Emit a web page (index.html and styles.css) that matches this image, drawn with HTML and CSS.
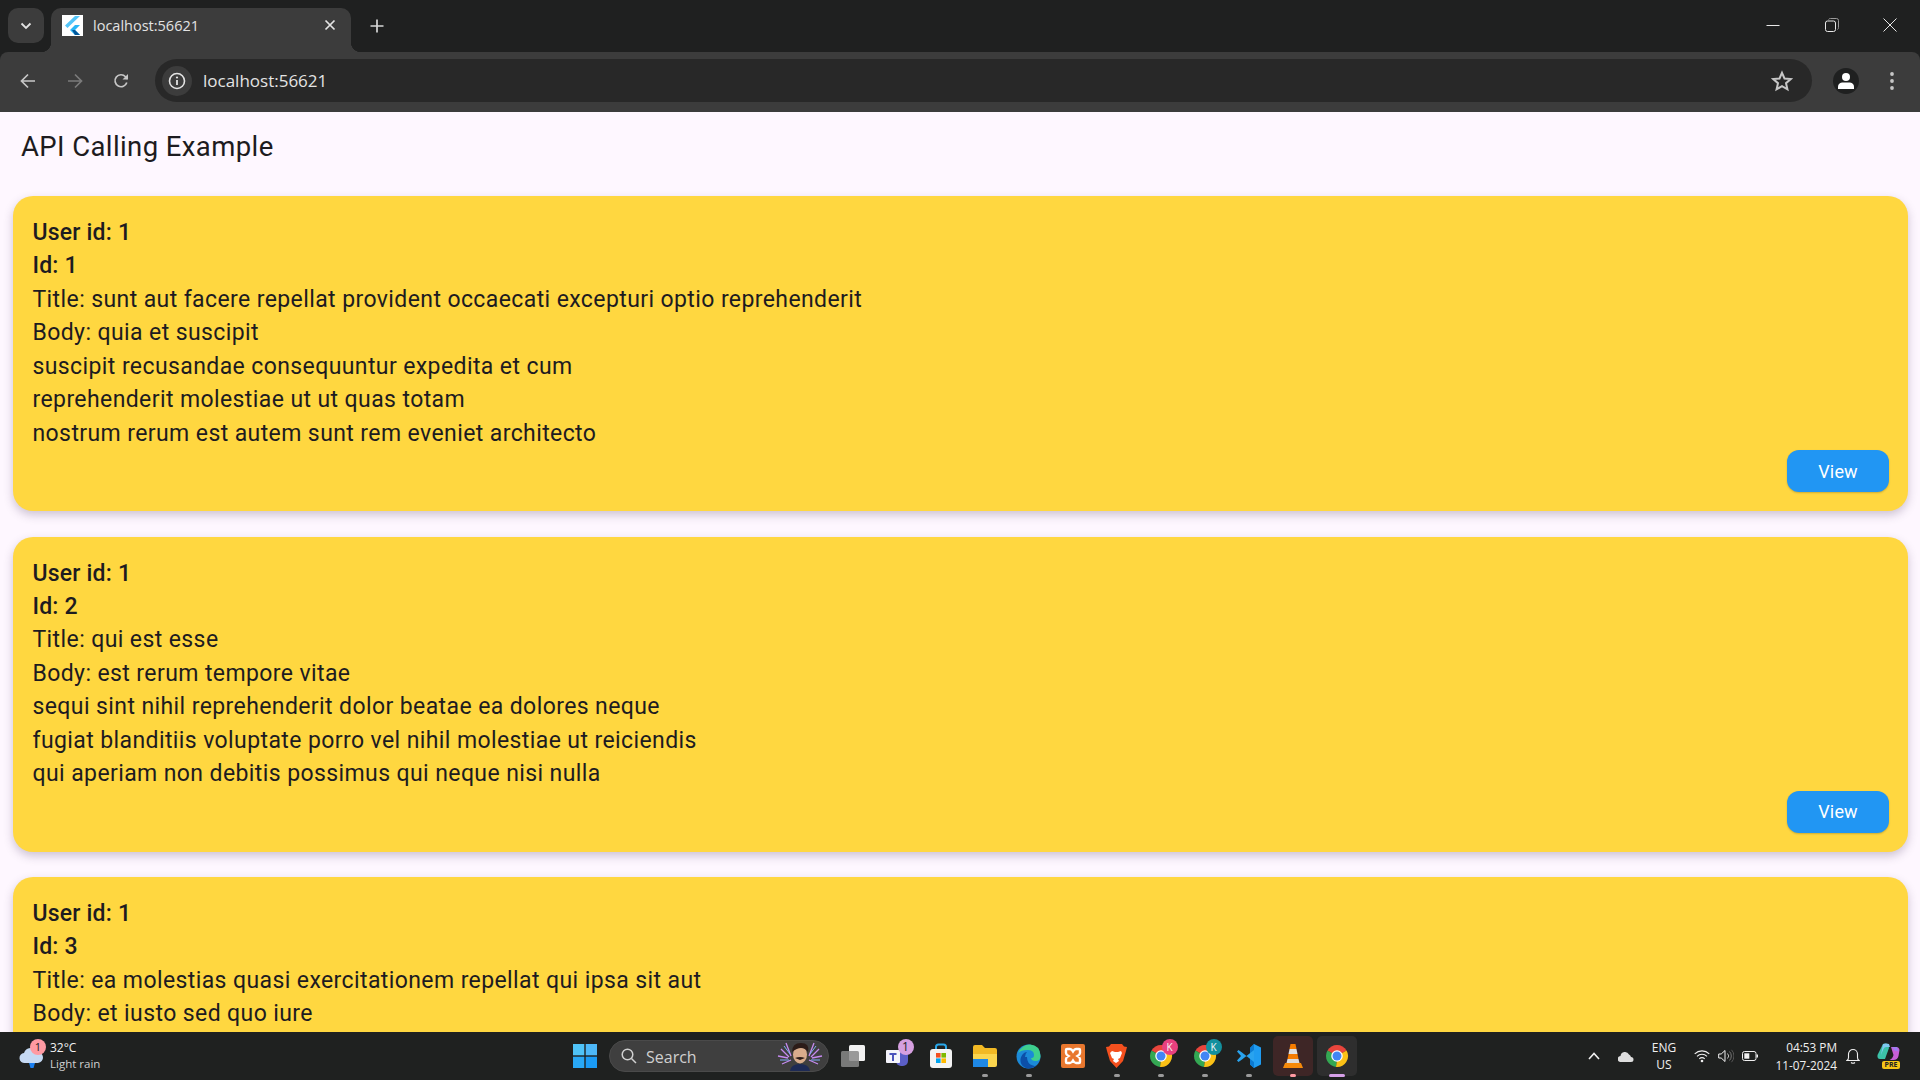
FILE: index.html
```html
<!DOCTYPE html>
<html lang="en">
<head>
<meta charset="utf-8">
<title>localhost:56621</title>
<link rel="stylesheet" href="styles.css">
</head>
<body>
<svg class="defs" width="0" height="0">
  <defs>
    <symbol id="chrome" viewBox="0 0 48 48">
      <path d="M24 24L4.950 13A22 22 0 0 1 43.050 13Z" fill="#e8453c"/>
      <path d="M24 24L43.050 13A22 22 0 0 1 22 45.900Z" fill="#fbc116"/>
      <path d="M24 24L22 45.900A22 22 0 0 1 4.950 13Z" fill="#34a853"/>
      <circle cx="24" cy="24" r="11.500" fill="#fff"/>
      <circle cx="24" cy="24" r="9" fill="#4285f4"/>
    </symbol>
  </defs>
</svg>

<header class="tabstrip">
  <div class="tab-search">
    <svg width="12" height="8" viewBox="0 0 12 8"><path d="M1.500 1.500L6 6l4.500-4.500" fill="none" stroke="#e3e3e3" stroke-width="1.800"/></svg>
  </div>
  <div class="tab">
    <div class="favicon">
      <svg width="21" height="21" viewBox="0 0 21 21"><path d="M13 1h5L8 10.500 5.500 13 3 10.500z" fill="#54c5f8"/><path d="M13 10h5l-5 5 5 5h-5l-5-5z" fill="#29b6f6"/><path d="M10 15l3 5h5l-5-5z" fill="#01579b"/></svg>
    </div>
    <span class="tab-title">localhost:56621</span>
    <svg class="tab-close" width="12" height="12" viewBox="0 0 12 12"><path d="M1.500 1.500l9 9M10.500 1.500l-9 9" stroke="#e3e3e3" stroke-width="1.700"/></svg>
  </div>
  <svg class="new-tab" width="14" height="14" viewBox="0 0 14 14"><path d="M7 0.500v13M0.500 7h13" stroke="#d6d6d6" stroke-width="1.700"/></svg>
  <div class="window-controls">
    <svg width="14" height="14" viewBox="0 0 14 14"><path d="M0.500 7.500h13" stroke="#e8e8e8" stroke-width="1"/></svg>
    <svg width="14" height="14" viewBox="0 0 14 14"><rect x="0.500" y="3" width="10" height="10.500" rx="2" fill="none" stroke="#e8e8e8"/><path d="M3.500 1.500q.5-1 2-1h6q2 0 2 2v7q0 1.500-1 2" fill="none" stroke="#9a9a9a"/></svg>
    <svg width="14" height="14" viewBox="0 0 14 14"><path d="M0.500 0.500l13 13M13.500 0.500l-13 13" stroke="#e8e8e8" stroke-width="1"/></svg>
  </div>
</header>

<nav class="toolbar">
  <svg class="nav-icon" width="16" height="16" viewBox="0 0 16 16"><path d="M15 8H2M8 1.500L1.500 8 8 14.500" fill="none" stroke="#c7c7c7" stroke-width="1.700"/></svg>
  <svg class="nav-icon" width="16" height="16" viewBox="0 0 16 16"><path d="M1 8h13M8 1.500L14.500 8 8 14.500" fill="none" stroke="#7b7b7b" stroke-width="1.700"/></svg>
  <svg class="nav-icon" width="16" height="16" viewBox="0 0 16 16"><path d="M13.800 9.500A6 6 0 1 1 12.500 3.700L14.500 6" fill="none" stroke="#c7c7c7" stroke-width="1.700"/><path d="M15 1v5.500H9.500z" fill="#c7c7c7"/></svg>
  <div class="omnibox">
    <div class="site-info">
      <svg width="18" height="18" viewBox="0 0 18 18"><circle cx="9" cy="9" r="7.500" fill="none" stroke="#e3e3e3" stroke-width="1.600"/><path d="M9 8v5" stroke="#e3e3e3" stroke-width="1.800"/><circle cx="9" cy="5.500" r="1.100" fill="#e3e3e3"/></svg>
    </div>
    <span class="url">localhost:56621</span>
    <svg class="star" width="22" height="22" viewBox="0 0 22 22"><path d="M11 2.800l2.500 5.700 6.200.6-4.700 4.100 1.400 6.100L11 16.100l-5.400 3.200L7 13.200 2.300 9.100l6.200-.6z" fill="none" stroke="#c7c7c7" stroke-width="2"/></svg>
  </div>
  <div class="avatar">
    <svg width="18" height="18" viewBox="0 0 18 18"><circle cx="9" cy="5" r="4" fill="#fff"/><path d="M1 17v-2q0-4 4-4.500h8q4 .5 4 4.500v2z" fill="#fff"/></svg>
  </div>
  <svg class="menu" width="4" height="18" viewBox="0 0 4 18"><circle cx="2" cy="2" r="1.900" fill="#c7c7c7"/><circle cx="2" cy="9" r="1.900" fill="#c7c7c7"/><circle cx="2" cy="16" r="1.900" fill="#c7c7c7"/></svg>
</nav>

<main class="page">
  <h1 class="app-title">API Calling Example</h1>
  <section class="post">
    <p class="strong">User id: 1</p>
    <p class="strong">Id: 1</p>
    <p>Title: sunt aut facere repellat provident occaecati excepturi optio reprehenderit</p>
    <p>Body: quia et suscipit</p>
    <p>suscipit recusandae consequuntur expedita et cum</p>
    <p>reprehenderit molestiae ut ut quas totam</p>
    <p>nostrum rerum est autem sunt rem eveniet architecto</p>
    <div class="post-actions"><button class="view">View</button></div>
  </section>
  <section class="post">
    <p class="strong">User id: 1</p>
    <p class="strong">Id: 2</p>
    <p>Title: qui est esse</p>
    <p>Body: est rerum tempore vitae</p>
    <p>sequi sint nihil reprehenderit dolor beatae ea dolores neque</p>
    <p>fugiat blanditiis voluptate porro vel nihil molestiae ut reiciendis</p>
    <p>qui aperiam non debitis possimus qui neque nisi nulla</p>
    <div class="post-actions"><button class="view">View</button></div>
  </section>
  <section class="post">
    <p class="strong">User id: 1</p>
    <p class="strong">Id: 3</p>
    <p>Title: ea molestias quasi exercitationem repellat qui ipsa sit aut</p>
    <p>Body: et iusto sed quo iure</p>
  </section>
</main>

<footer class="taskbar">
  <div class="weather">
    <div class="weather-icon">
      <svg width="28" height="26" viewBox="0 0 28 26"><path d="M8 20a5 5 0 0 1-1-10 7 7 0 0 1 13-1 5.500 5.500 0 0 1 1 11z" fill="#c5d9f3"/><path d="M12 20h6l-1.500 5h-3z" fill="#1a7ff0"/></svg>
      <span class="weather-badge">1</span>
    </div>
    <div class="weather-text"><span class="temp">32°C</span><span class="cond">Light rain</span></div>
  </div>

  <div class="task-center">
    <div class="slot">
      <svg width="24" height="24" viewBox="0 0 24 24"><rect x="0" y="0" width="11.300" height="11.300" fill="#4fc3f7"/><rect x="12.700" y="0" width="11.300" height="11.300" fill="#4db8f8"/><rect x="0" y="12.700" width="11.300" height="11.300" fill="#29a8f5"/><rect x="12.700" y="12.700" width="11.300" height="11.300" fill="#1a9bf5"/></svg>
    </div>
    <div class="search">
      <svg width="16" height="16" viewBox="0 0 16 16"><circle cx="6.500" cy="6.500" r="5.300" fill="none" stroke="#d0d0d0" stroke-width="1.500"/><path d="M10.500 10.500L15 15" stroke="#d0d0d0" stroke-width="1.500"/></svg>
      <span class="search-label">Search</span>
      <svg class="search-art" width="46" height="30" viewBox="0 0 46 30">
        <path d="M1 15L11 17M4 8l8 8M9 2l5 13M5 23l9-4M45 15L35 17M42 8l-8 8M37 2l-5 13M41 23l-9-4" stroke="#c58af0" stroke-width="1.300" fill="none"/>
        <path d="M7 5l6 8M39 5l-6 8M3 19l9 0M43 19l-9 0" stroke="#7fb0f5" stroke-width="1"/>
        <path d="M13 30q1-7 10-7t10 7z" fill="#1d2a55"/>
        <ellipse cx="23" cy="13.500" rx="7" ry="9" fill="#d8ac8c"/>
        <path d="M15 11q0-9 9-9t7 9q-3-4-7-4t-9 4z" fill="#2c1c18"/>
        <path d="M18 17q5-2 10 0l-5 2z" fill="#2c1c18"/>
      </svg>
    </div>
    <div class="slot">
      <svg width="24" height="22" viewBox="0 0 24 22"><rect x="8" y="0" width="16" height="16" rx="1.500" fill="#f2f2f2"/><rect x="0" y="6" width="18" height="16" rx="1.500" fill="#8a8a8a" fill-opacity=".85"/></svg>
    </div>
    <div class="slot">
      <svg width="24" height="24" viewBox="0 0 24 24"><rect x="11" y="6" width="12" height="16" rx="5" fill="#5b5fc7"/><rect x="1" y="6" width="14" height="13" rx="1" fill="#f4f4fb"/><path d="M4.500 9h7v2H9v6H7v-6H4.500z" fill="#4b53bc"/></svg>
      <span class="count-badge">1</span>
    </div>
    <div class="slot">
      <svg width="24" height="26" viewBox="0 0 24 26"><path d="M7 6V4q0-2.500 2.500-2.500h5Q17 1.500 17 4v2" fill="none" stroke="#2aa7e8" stroke-width="2"/><rect x="1" y="6" width="22" height="19" rx="3" fill="#f3f3f3"/><rect x="7" y="10" width="4.600" height="4.600" fill="#f25022"/><rect x="12.400" y="10" width="4.600" height="4.600" fill="#7fba00"/><rect x="7" y="15.400" width="4.600" height="4.600" fill="#00a4ef"/><rect x="12.400" y="15.400" width="4.600" height="4.600" fill="#ffb900"/></svg>
    </div>
    <div class="slot">
      <svg width="24" height="22" viewBox="0 0 24 22"><path d="M0 2q0-2 2-2h7l3 3h10q2 0 2 2v15H0z" fill="#f2b924"/><path d="M0 9h24v11q0 2-2 2H2q-2 0-2-2z" fill="#fbd54e"/><rect x="0" y="14" width="15" height="8" fill="#1e88e5"/></svg>
      <span class="run-dot"></span>
    </div>
    <div class="slot">
      <svg width="25" height="25" viewBox="0 0 25 25"><circle cx="12.500" cy="12.500" r="12" fill="#1b8ad8"/><path d="M2 9Q6 .5 14 .5 24 1 24.500 12q0 5-5 5-4 0-4.500-3 3 .5 3-3 0-5-6.500-5T2 9z" fill="#3ecf8e"/><path d="M11 13q0 7 6 8.500 2 1 4-.5-3 3-8.500 3.500C7 24 4 20 4.500 15 5.500 11 8 8 11 8q-2 2-2 5z" fill="#0c4fa8"/></svg>
      <span class="run-dot"></span>
    </div>
    <div class="slot">
      <svg width="24" height="24" viewBox="0 0 24 24"><rect width="24" height="24" rx="2" fill="#e8772e"/><path d="M6 5h3q1.500 0 3 2.500Q13.500 5 15 5h3q1 0 1 1v3q0 1.500-2.500 3 2.500 1.500 2.500 3v3q0 1-1 1h-3q-1.500 0-3-2.500Q10.500 19 9 19H6q-1 0-1-1v-3q0-1.500 2.500-3Q5 10.500 5 9V6q0-1 1-1z" fill="none" stroke="#fff" stroke-width="2.400"/></svg>
    </div>
    <div class="slot">
      <svg width="21" height="24" viewBox="0 0 21 24"><path d="M5 0h11l2 2.500 3 .5-1 4-3 10-6.500 7L4 17 1 7 0 3l3-.5z" fill="#f4501e"/><path d="M6 7l3 1h3l3-1 1 2-2 5-2 1 1 2-3 2-3-2 1-2-2-1-2-5z" fill="#fff"/></svg>
      <span class="run-dot"></span>
    </div>
    <div class="slot">
      <svg width="24" height="24"><use href="#chrome"/></svg>
      <span class="profile-badge pink">K</span>
      <span class="run-dot"></span>
    </div>
    <div class="slot">
      <svg width="24" height="24"><use href="#chrome"/></svg>
      <span class="profile-badge teal">K</span>
      <span class="run-dot"></span>
    </div>
    <div class="slot">
      <svg width="24" height="24" viewBox="0 0 24 24"><path d="M17 0l7 3.500v17L17 24l-4-3.500V4z" fill="#1f9cf0"/><path d="M17 0v24l-4-3.500V4z" fill="#0b7ad1"/><path d="M17 18L5 8.500 1.500 6 0 7.500 4 12l-4 4.500L1.500 18 5 15.500 17 6z" fill="#29a3ee"/></svg>
      <span class="run-dot"></span>
    </div>
    <div class="slot active vlc">
      <svg width="20" height="24" viewBox="0 0 20 24"><path d="M7.500 0h5l1 5h-7z" fill="#f57c00"/><path d="M6.500 5h7l1 5h-9z" fill="#e0e0e0"/><path d="M5.500 10h9l1 5h-11z" fill="#f57c00"/><path d="M4.500 15h11l1 4h-13z" fill="#dcdcdc"/><path d="M2 19h16l2 5H0z" fill="#f58a0b"/></svg>
      <span class="run-dot salmon"></span>
    </div>
    <div class="slot active">
      <svg width="24" height="24"><use href="#chrome"/></svg>
      <span class="run-dot lilac"></span>
    </div>
  </div>

  <div class="tray">
    <svg class="tray-chevron" width="12" height="8" viewBox="0 0 12 8"><path d="M1 7l5-5.500L11 7" fill="none" stroke="#f0f0f0" stroke-width="1.600"/></svg>
    <svg class="tray-cloud" width="16" height="11" viewBox="0 0 16 11"><path d="M3 11a3 3 0 0 1-.5-6 4.500 4.500 0 0 1 8.500-1.500 4 4 0 0 1 2 2.500 2.500 2.500 0 0 1 0 5z" fill="#dedede"/></svg>
    <div class="lang"><span>ENG</span><span>US</span></div>
    <svg class="tray-wifi" width="16" height="14" viewBox="0 0 16 14"><path d="M.7 4.800a10.500 10.500 0 0 1 14.600 0M3 7.300a7.200 7.200 0 0 1 10 0M5.300 9.800a3.800 3.800 0 0 1 5.400 0" fill="none" stroke="#f0f0f0" stroke-width="1.100"/><circle cx="8" cy="12" r="1.300" fill="#f0f0f0"/></svg>
    <svg class="tray-next" width="16" height="14" viewBox="0 0 16 14"><path d="M.7 5h2.500L7 1.500v11L3.200 9H.7z" fill="none" stroke="#f0f0f0"/><path d="M9.500 4.500a3.500 3.500 0 0 1 0 5" fill="none" stroke="#bdbdbd"/><path d="M11.500 2.500a6.500 6.500 0 0 1 0 9" fill="none" stroke="#777"/><path d="M13.500 .8a9 9 0 0 1 0 12.400" fill="none" stroke="#555"/></svg>
    <svg class="tray-next" width="16" height="10" viewBox="0 0 16 10"><rect x=".5" y=".5" width="13.500" height="9" rx="2" fill="none" stroke="#f0f0f0"/><rect x="2.300" y="2.300" width="5" height="5.400" fill="#f0f0f0"/><rect x="14.500" y="3.500" width="1.500" height="3" fill="#f0f0f0"/></svg>
    <div class="clock"><span>04:53 PM</span><span>11-07-2024</span></div>
    <svg class="bell" width="14" height="16" viewBox="0 0 14 16"><path d="M1 12.500q1.500-1 1.500-3V6a4.500 4.500 0 0 1 9 0v3.500q0 2 1.500 3z" fill="none" stroke="#f0f0f0" stroke-width="1.100"/><path d="M5 14.500q2 1.500 4 0" fill="none" stroke="#f0f0f0" stroke-width="1.100"/></svg>
    <div class="copilot">
      <svg width="23" height="20" viewBox="0 0 23 20"><path d="M6 1q2-1 5 0l1 4-4 11H3Q0 16 .5 12z" fill="#3bc2a8"/><path d="M6 1q3-1 6 0l1 3H9q-2 0-3 3L4 12z" fill="#7ec8f0"/><path d="M14 4h5q3 0 3.500 3l-1 6q-1 4-5 4h-4q3-1 4-5z" fill="#c85fd8"/><path d="M15 4h5l2 5q-2-2-4-1z" fill="#9f7cf0"/></svg>
      <span class="pre">PRE</span>
    </div>
  </div>
</footer>
</body>
</html>
```

FILE: styles.css
```css
* { box-sizing: border-box; }
html, body { margin: 0; height: 100%; }
body {
  display: flex;
  flex-direction: column;
  width: 1920px;
  height: 1080px;
  overflow: hidden;
  background: #1f2020;
  font-family: "Open Sans", "Noto Sans", sans-serif;
}
.defs { position: absolute; }

/* tab strip */
.tabstrip {
  flex: 0 0 52px;
  display: flex;
  align-items: flex-start;
  padding: 8px 0 0 8px;
  background: #1f2020;
}
.tab-search {
  width: 36px;
  height: 35px;
  border-radius: 10px;
  background: #3c3c3c;
  display: flex;
  align-items: center;
  justify-content: center;
}
.tab {
  position: relative;
  width: 300px;
  height: 44px;
  margin-left: 7px;
  padding: 7px 14px 0 11px;
  display: flex;
  align-items: flex-start;
  background: #3c3c3c;
  border-radius: 10px 10px 0 0;
}
.tab::before, .tab::after {
  content: "";
  position: absolute;
  bottom: 0;
  width: 10px;
  height: 10px;
}
.tab::before { left: -10px; background: radial-gradient(circle at 0 0, transparent 10px, #3c3c3c 10.500px); }
.tab::after { right: -10px; background: radial-gradient(circle at 100% 0, transparent 10px, #3c3c3c 10.500px); }
.favicon {
  width: 21px;
  height: 21px;
  background: #fff;
  flex: none;
}
.tab-title {
  margin-left: 10px;
  flex: 1;
  color: #e3e3e3;
  font-size: 14.500px;
  line-height: 21px;
}
.tab-close { margin-top: 4px; margin-right: 1px; }
.new-tab { margin: 11px 0 0 19px; }
.window-controls {
  margin-left: auto;
  margin-top: 10px;
  padding-right: 23px;
  display: flex;
  gap: 44.500px;
}

/* toolbar */
.toolbar {
  flex: 0 0 60px;
  display: flex;
  align-items: center;
  padding: 0 26px 2px 20px;
  background: #3c3c3c;
  border-radius: 8px 8px 0 0;
}
.nav-icon { margin-right: 31px; flex: none; }
.nav-icon:nth-child(2) { margin-right: 30px; }
.nav-icon:nth-child(3) { margin-right: 26px; }
.omnibox {
  flex: 1;
  height: 43px;
  margin-top: -1px;
  padding: 0 19px 0 7px;
  display: flex;
  align-items: center;
  border-radius: 22px;
  background: #282828;
}
.site-info {
  width: 30px;
  height: 30px;
  border-radius: 50%;
  background: #3c3c3c;
  display: flex;
  align-items: center;
  justify-content: center;
}
.url {
  margin-left: 11px;
  flex: 1;
  padding-bottom: 1px;
  color: #e3e3e3;
  font-size: 17px;
}
.avatar {
  width: 26px;
  height: 26px;
  margin: 0 31px 0 21px;
  border-radius: 50%;
  background: #1f2020;
  display: flex;
  align-items: center;
  justify-content: center;
}
.menu { flex: none; }

/* page */
.page {
  flex: 0 0 920px;
  overflow: hidden;
  padding: 0 12px 0 13px;
  background: #fef7ff;
  font-family: Roboto, sans-serif;
  color: #1d1b20;
}
.app-title {
  margin: 0;
  height: 84px;
  padding: 18px 0 0 8px;
  font-size: 27.500px;
  font-weight: 400;
  letter-spacing: .4px;
  line-height: 34px;
}
.post {
  height: 315px;
  margin-bottom: 25.500px;
  padding: 20px 19px 0 19.500px;
  border-radius: 20px;
  background: #ffd740;
  box-shadow: 0 4px 10px rgba(60, 40, 80, .25);
  font-size: 23px;
  letter-spacing: .4px;
  line-height: 33.450px;
}
.post p { margin: 0; white-space: nowrap; }
.post .strong { font-weight: 500; letter-spacing: .2px; }
.post-actions { display: flex; justify-content: flex-end; }
.view {
  width: 102px;
  height: 42px;
  border: 0;
  border-radius: 12px;
  background: #2196f3;
  color: #fff;
  font: 400 18px Roboto, sans-serif;
  letter-spacing: .13px;
  box-shadow: 0 1px 2px rgba(0, 0, 0, .2);
}

/* taskbar */
.taskbar {
  flex: 0 0 48px;
  position: relative;
  display: flex;
  align-items: center;
  background: #1f2120;
  color: #f0f0f0;
}
.weather {
  width: 563px;
  padding-left: 17px;
  display: flex;
  align-items: center;
  gap: 5px;
}
.weather-icon { position: relative; width: 28px; height: 26px; }
.weather-badge {
  position: absolute;
  top: -4px;
  left: 13px;
  width: 16px;
  height: 16px;
  border-radius: 50%;
  background: #ff9aa2;
  color: #222;
  font-size: 11px;
  line-height: 16px;
  text-align: center;
}
.weather-text { display: flex; flex-direction: column; font-size: 11.500px; line-height: 16px; }
.temp { font-size: 12px; }
.cond { color: #d0d0d0; }

.task-center { display: flex; align-items: center; }
.slot {
  position: relative;
  width: 44px;
  height: 40px;
  border-radius: 5px;
  display: flex;
  align-items: center;
  justify-content: center;
}
.slot.active { width: 40px; margin: 0 2px; background: #2e2e2e; }
.slot.vlc { background: #3e2626; }
.search {
  width: 220px;
  height: 32px;
  margin: 0 1.500px 0 2px;
  padding: 0 5px 0 11px;
  display: flex;
  align-items: center;
  border-radius: 16px;
  border: 1px solid #4a4a4a;
  background: #3f3f3f;
}
.search-label { margin-left: 9px; padding-top: 2px; flex: 1; font-size: 16px; color: #d0d0d0; }
.search-art { flex: none; }
.count-badge {
  position: absolute;
  top: 3px;
  right: 5px;
  width: 16px;
  height: 16px;
  border-radius: 50%;
  background: #d6a0e0;
  color: #222;
  font-size: 12px;
  line-height: 16px;
  text-align: center;
}
.profile-badge {
  position: absolute;
  top: 3px;
  right: 5px;
  width: 16px;
  height: 16px;
  border-radius: 50%;
  color: #f6f6f6;
  font-size: 10px;
  line-height: 16px;
  text-align: center;
}
.pink { background: #e8407f; }
.teal { background: #13909e; }
.run-dot {
  position: absolute;
  bottom: -1px;
  left: 50%;
  width: 6px;
  height: 3px;
  margin-left: -3px;
  border-radius: 2px;
  background: #9a9a9a;
}
.run-dot.salmon { background: #ff9aa2; }
.run-dot.lilac { width: 16px; margin-left: -8px; background: #d6a0e8; }

.tray {
  position: absolute;
  right: 20px;
  top: 0;
  height: 48px;
  display: flex;
  align-items: center;
}
.tray-cloud { margin-left: 18px; }
.lang {
  width: 24px;
  margin-left: 18px;
  display: flex;
  flex-direction: column;
  align-items: center;
  font-size: 12px;
  line-height: 17px;
  white-space: nowrap;
}
.tray-wifi { margin-left: 18px; }
.tray-next { margin-left: 8px; }
.clock {
  width: 62px;
  margin-left: 17px;
  display: flex;
  flex-direction: column;
  align-items: flex-end;
  font-size: 11.800px;
  line-height: 18px;
  white-space: nowrap;
}
.bell { margin-left: 9px; }
.copilot { position: relative; width: 23px; height: 26px; margin-left: 17px; }
.pre {
  position: absolute;
  left: 5px;
  bottom: 0;
  width: 18px;
  height: 8px;
  border-radius: 2px;
  background: #f5c518;
  color: #222;
  font-size: 7px;
  font-weight: 700;
  line-height: 8px;
  text-align: center;
}
```
